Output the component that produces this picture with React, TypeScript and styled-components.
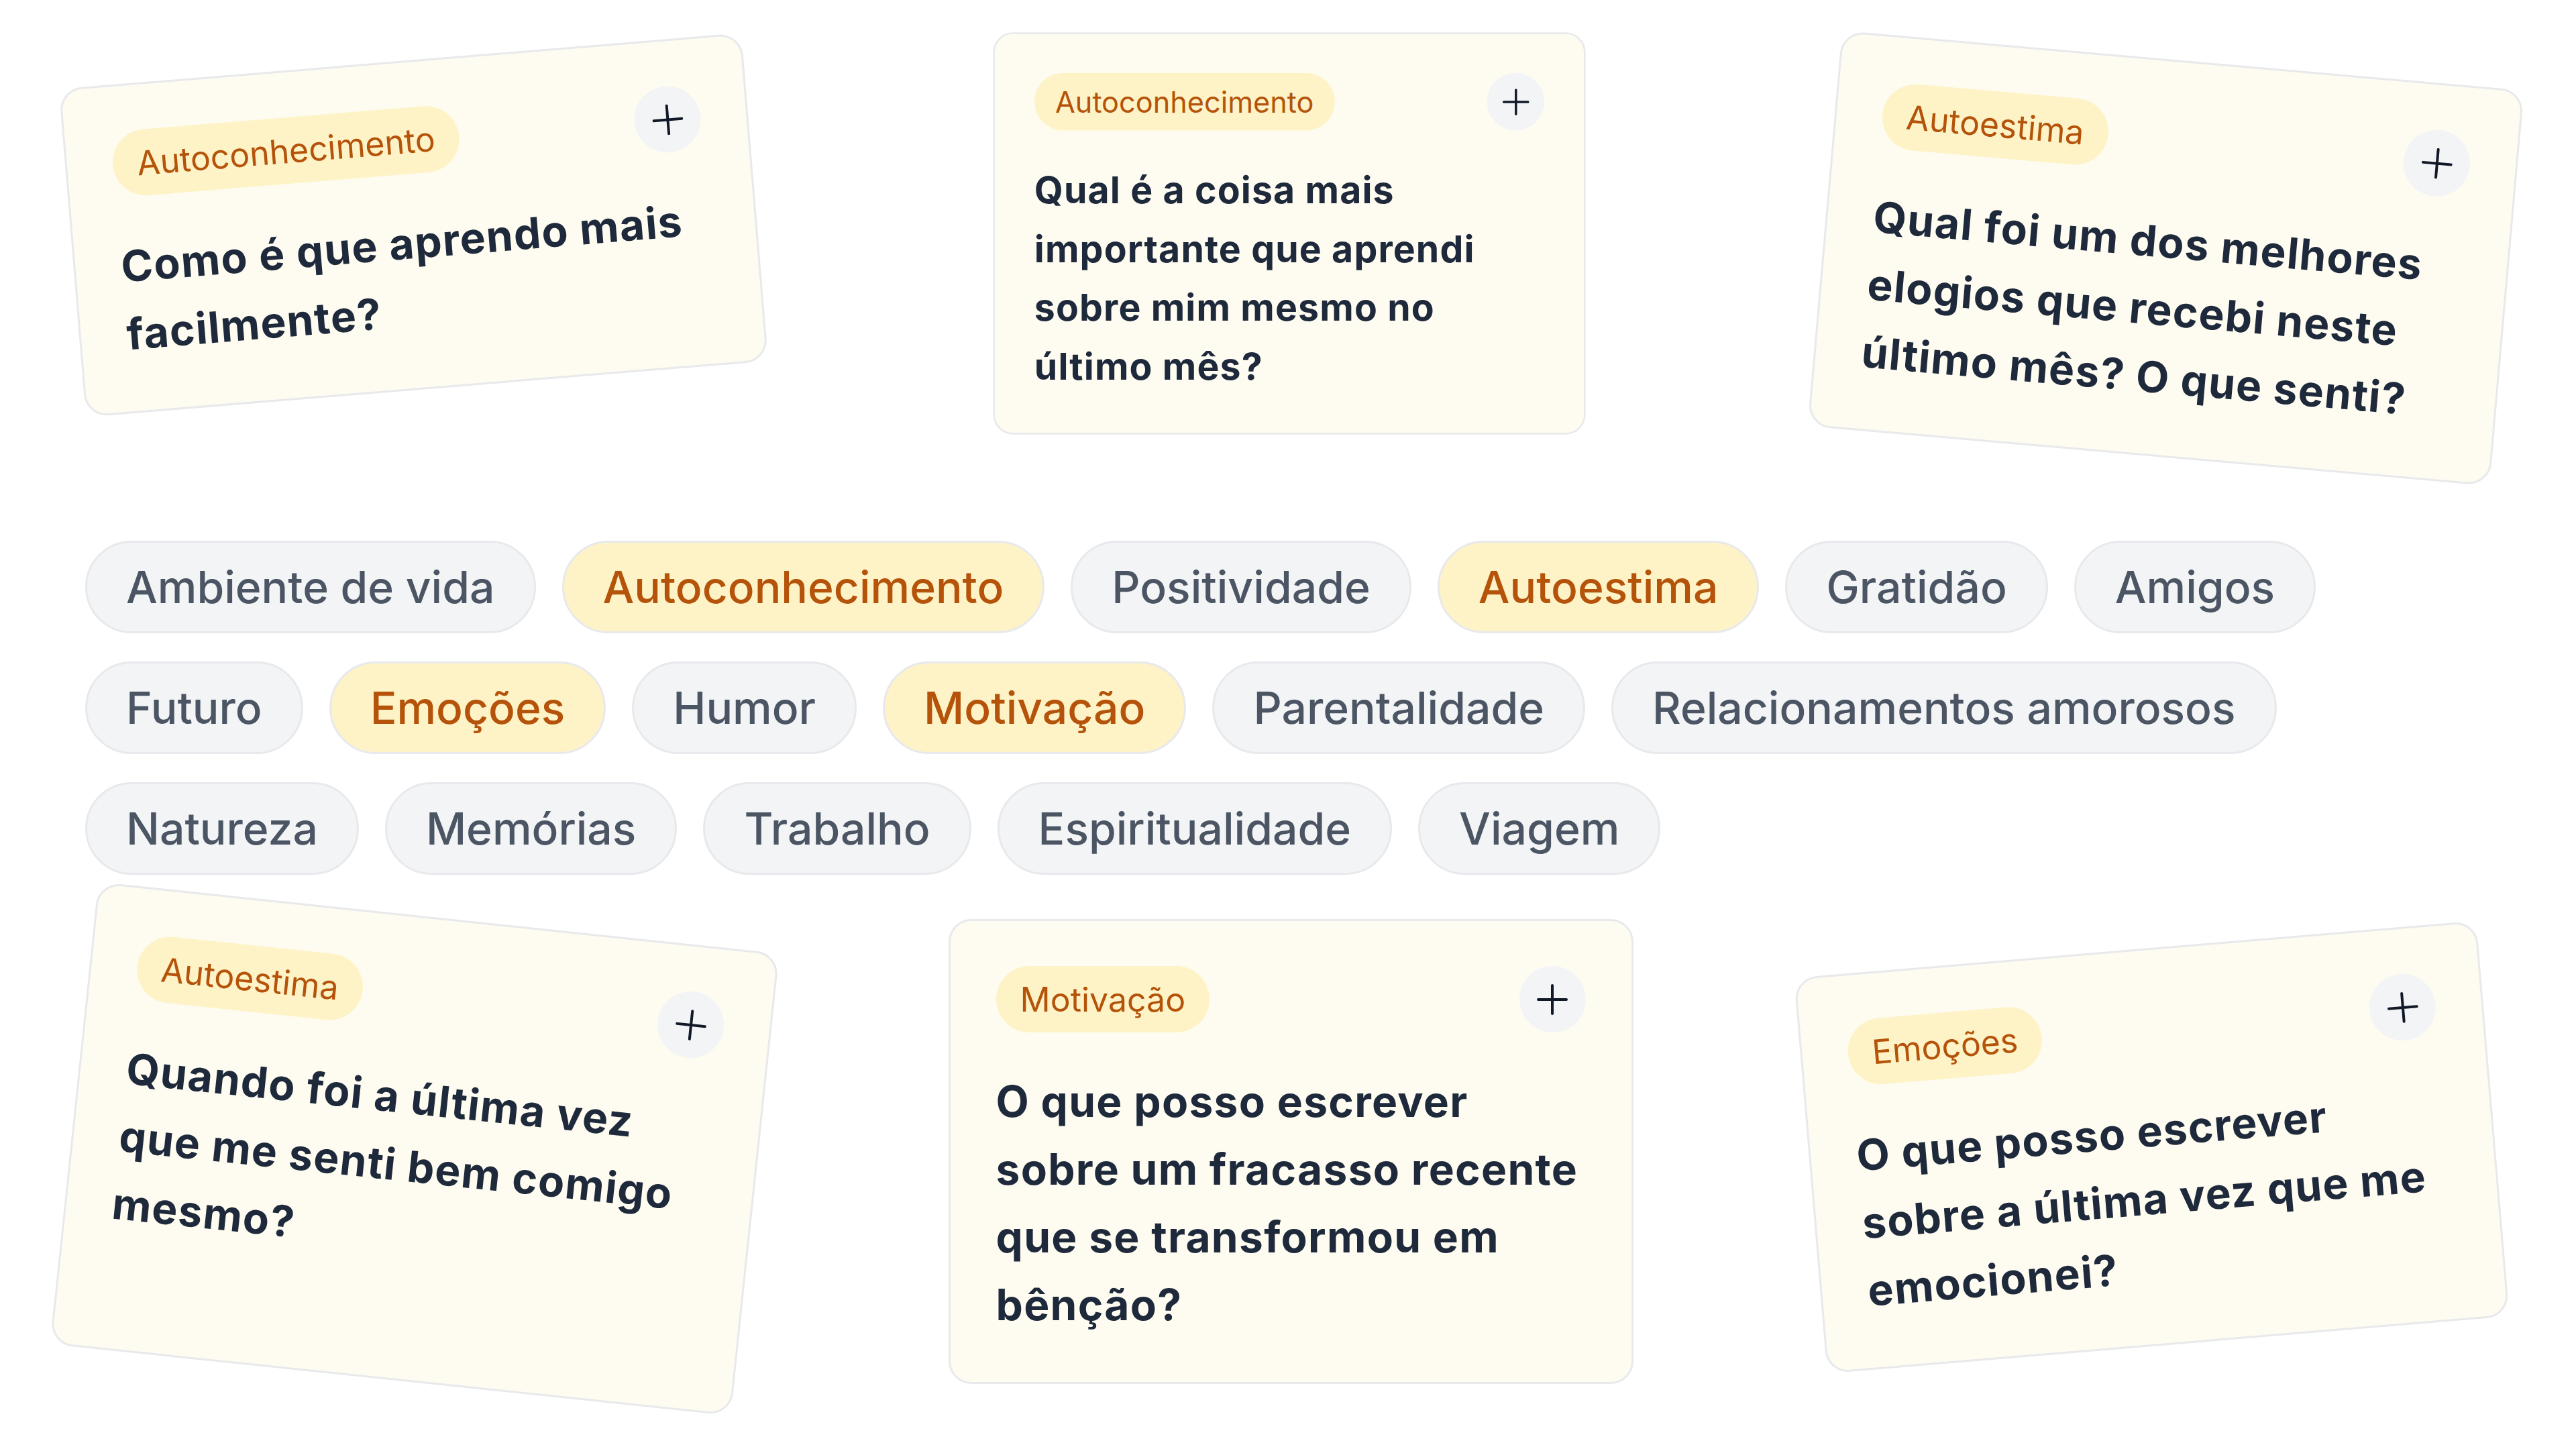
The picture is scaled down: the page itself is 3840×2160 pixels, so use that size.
import styled, { createGlobalStyle } from "styled-components"

const GlobalStyle = createGlobalStyle`
	html, body {
		margin: 0;
		padding: 0;
		background: #ffffff;
	}
	body {
		font-family: Inter, "Noto Sans", "Liberation Sans", sans-serif;
		-webkit-font-smoothing: antialiased;
	}
`

type Prompt = {
	tag: string
	text: string
	dx: number
	dy: number
	rotate: number
	scale?: number
	stretch?: boolean
}

const topPrompts: Prompt[] = [
	{ tag: "Autoconhecimento", text: "Como é que aprendo mais facilmente?", dx: -1, dy: -11, rotate: -4.7 },
	{ tag: "Autoconhecimento", text: "Qual é a coisa mais importante que aprendi sobre mim mesmo no último mês?", dx: 1.5, dy: 1.5, rotate: 0, scale: 0.865 },
	{ tag: "Autoestima", text: "Qual foi um dos melhores elogios que recebi neste último mês? O que senti?", dx: 6, dy: 38, rotate: 5 },
]

const bottomPrompts: Prompt[] = [
	{ tag: "Autoestima", text: "Quando foi a última vez que me senti bem comigo mesmo?", dx: 0.5, dy: -4, rotate: 6, stretch: true },
	{ tag: "Motivação", text: "O que posso escrever sobre um fracasso recente que se transformou em bênção?", dx: 4, dy: 0, rotate: 0 },
	{ tag: "Emoções", text: "O que posso escrever sobre a última vez que me emocionei?", dx: -15, dy: -7, rotate: -4.8 },
]

const topics = [
	{ label: "Ambiente de vida" },
	{ label: "Autoconhecimento", active: true },
	{ label: "Positividade" },
	{ label: "Autoestima", active: true },
	{ label: "Gratidão" },
	{ label: "Amigos" },
	{ label: "Futuro" },
	{ label: "Emoções", active: true },
	{ label: "Humor" },
	{ label: "Motivação", active: true },
	{ label: "Parentalidade" },
	{ label: "Relacionamentos amorosos" },
	{ label: "Natureza" },
	{ label: "Memórias" },
	{ label: "Trabalho" },
	{ label: "Espiritualidade" },
	{ label: "Viagem" },
]

const PlusIcon = () => (
	<svg width="46" height="46" viewBox="0 0 46 46" fill="none">
		<path d="M23 2v42M2 23h42" stroke="#111827" strokeWidth="4" strokeLinecap="round" />
	</svg>
)

const PromptCard = ({ prompt }: { prompt: Prompt }) => (
	<Card
		$dx={prompt.dx}
		$dy={prompt.dy}
		$rotate={prompt.rotate}
		$scale={prompt.scale ?? 1}
		$stretch={!!prompt.stretch}
	>
		<CardHeader>
			<Tag>{prompt.tag}</Tag>
			<AddButton aria-label="Adicionar">
				<PlusIcon />
			</AddButton>
		</CardHeader>
		<Question>{prompt.text}</Question>
	</Card>
)

const App = () => {
	return (
		<>
			<GlobalStyle />
			<Page>
				<CardRow>
					{topPrompts.map((p, i) => (
						<PromptCard key={i} prompt={p} />
					))}
				</CardRow>
				<Topics>
					{topics.map((t) => (
						<Topic key={t.label} $active={!!t.active}>
							{t.label}
						</Topic>
					))}
				</Topics>
				<CardRow $spaced>
					{bottomPrompts.map((p, i) => (
						<PromptCard key={i} prompt={p} />
					))}
				</CardRow>
			</Page>
		</>
	)
}

export default App

const Page = styled.main`
	width: 3840px;
	height: 2160px;
	overflow: hidden;
	display: flex;
	flex-direction: column;
`

const CardRow = styled.section<{ $spaced?: boolean }>`
	display: grid;
	grid-template-columns: repeat(3, 1021px);
	grid-template-rows: minmax(693px, auto);
	justify-content: space-between;
	align-items: center;
	padding: 0 107px;
	margin-top: ${(p) => (p.$spaced ? "66px" : "0")};
`

const Card = styled.article<{ $dx: number; $dy: number; $rotate: number; $scale: number; $stretch: boolean }>`
	box-sizing: border-box;
	display: flex;
	flex-direction: column;
	gap: 52px;
	padding: 67px 66px 65px 68px;
	background: #fefcf0;
	border: 3px solid #e8e9ec;
	border-radius: 34px;
	align-self: ${(p) => (p.$stretch ? "stretch" : "center")};
	transform: translate(${(p) => p.$dx}px, ${(p) => p.$dy}px) rotate(${(p) => p.$rotate}deg)
		scale(${(p) => p.$scale});
`

const CardHeader = styled.div`
	display: flex;
	align-items: center;
	justify-content: space-between;
	padding-right: 2px;
`

const Tag = styled.span`
	display: inline-flex;
	align-items: center;
	height: 99px;
	padding: 0 36px;
	border-radius: 999px;
	background: #fef3c7;
	color: #b45309;
	font-size: 50px;
	font-weight: 400;
`

const AddButton = styled.button`
	display: flex;
	align-items: center;
	justify-content: center;
	width: 99px;
	height: 99px;
	padding: 0;
	border: none;
	border-radius: 50%;
	background: #f3f4f6;
`

const Question = styled.p`
	margin: 0;
	color: #1e293b;
	font-size: 64px;
	font-weight: 700;
	letter-spacing: 1.3px;
	line-height: 101px;
`

const Topics = styled.nav`
	display: flex;
	flex-wrap: wrap;
	gap: 42px 39px;
	padding: 0 127px;
	margin-top: 113px;
`

const Topic = styled.span<{ $active: boolean }>`
	box-sizing: border-box;
	display: inline-flex;
	align-items: center;
	height: 138px;
	padding: 0 58px;
	border: 3px solid #e8e9ec;
	border-radius: 999px;
	background: ${(p) => (p.$active ? "#fef3c7" : "#f3f4f6")};
	color: ${(p) => (p.$active ? "#b45309" : "#4b5563")};
	font-size: 66px;
	font-weight: 500;
	white-space: nowrap;
`
